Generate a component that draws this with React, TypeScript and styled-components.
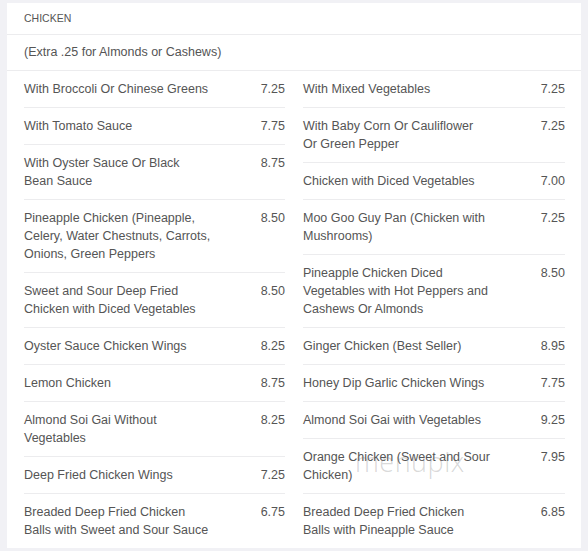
import React from "react";
import styled, { createGlobalStyle } from "styled-components";

const GlobalStyle = createGlobalStyle`
  html, body {
    margin: 0;
    padding: 0;
    background: #f1f1f5;
  }
  body {
    font-family: "Liberation Sans", Arial, sans-serif;
    color: #555;
  }
`;

const Page = styled.div`
  padding: 3px 7px 3px 7px;
`;

const Card = styled.div`
  position: relative;
  width: 574px;
  background: #fff;
`;

const Header = styled.div`
  padding: 8px 17px 8px;
  font-size: 10.5px;
  line-height: 15px;
  text-transform: uppercase;
  color: #555;
  border-bottom: 1px solid #ececee;
`;

const Note = styled.div`
  padding: 8px 17px 9px;
  font-size: 12.5px;
  line-height: 18px;
  color: #555;
  border-bottom: 1px solid #ececee;
`;

const Columns = styled.div`
  display: grid;
  grid-template-columns: 261px 262px;
  column-gap: 18px;
  padding: 0 16px 0 17px;
`;

const Column = styled.div`
  display: flex;
  flex-direction: column;
`;

const Item = styled.div`
  display: flex;
  justify-content: space-between;
  align-items: flex-start;
  padding: 9px 0;
  font-size: 12.5px;
  line-height: 18px;
  color: #555;
  border-bottom: 1px solid #ececee;
  &:last-child {
    border-bottom: none;
  }
`;

const Name = styled.div`
  width: 205px;
  white-space: pre-line;
`;

const Price = styled.div`
  text-align: right;
`;

const Watermark = styled.div`
  position: absolute;
  left: 348px;
  top: 444px;
  font-family: "Open Sans", "Liberation Sans", sans-serif;
  font-weight: 300;
  font-size: 27px;
  line-height: 30px;
  color: rgba(110, 110, 110, 0.27);
  pointer-events: none;
  letter-spacing: 0.5px;
`;

type Dish = { name: string; price: string };

const left: Dish[] = [
  { name: "With Broccoli Or Chinese Greens", price: "7.25" },
  { name: "With Tomato Sauce", price: "7.75" },
  { name: "With Oyster Sauce Or Black\nBean Sauce", price: "8.75" },
  { name: "Pineapple Chicken (Pineapple,\nCelery, Water Chestnuts, Carrots,\nOnions, Green Peppers", price: "8.50" },
  { name: "Sweet and Sour Deep Fried\nChicken with Diced Vegetables", price: "8.50" },
  { name: "Oyster Sauce Chicken Wings", price: "8.25" },
  { name: "Lemon Chicken", price: "8.75" },
  { name: "Almond Soi Gai Without\nVegetables", price: "8.25" },
  { name: "Deep Fried Chicken Wings", price: "7.25" },
  { name: "Breaded Deep Fried Chicken\nBalls with Sweet and Sour Sauce", price: "6.75" },
];

const right: Dish[] = [
  { name: "With Mixed Vegetables", price: "7.25" },
  { name: "With Baby Corn Or Cauliflower\nOr Green Pepper", price: "7.25" },
  { name: "Chicken with Diced Vegetables", price: "7.00" },
  { name: "Moo Goo Guy Pan (Chicken with\nMushrooms)", price: "7.25" },
  { name: "Pineapple Chicken Diced\nVegetables with Hot Peppers and\nCashews Or Almonds", price: "8.50" },
  { name: "Ginger Chicken (Best Seller)", price: "8.95" },
  { name: "Honey Dip Garlic Chicken Wings", price: "7.75" },
  { name: "Almond Soi Gai with Vegetables", price: "9.25" },
  { name: "Orange Chicken (Sweet and Sour\nChicken)", price: "7.95" },
  { name: "Breaded Deep Fried Chicken\nBalls with Pineapple Sauce", price: "6.85" },
];

const renderColumn = (items: Dish[]) => (
  <Column>
    {items.map((d) => (
      <Item key={d.name}>
        <Name>{d.name}</Name>
        <Price>{d.price}</Price>
      </Item>
    ))}
  </Column>
);

export default function App() {
  return (
    <>
      <GlobalStyle />
      <Page>
        <Card>
          <Header>Chicken</Header>
          <Note>(Extra .25 for Almonds or Cashews)</Note>
          <Columns>
            {renderColumn(left)}
            {renderColumn(right)}
          </Columns>
          <Watermark>menupix</Watermark>
        </Card>
      </Page>
    </>
  );
}
